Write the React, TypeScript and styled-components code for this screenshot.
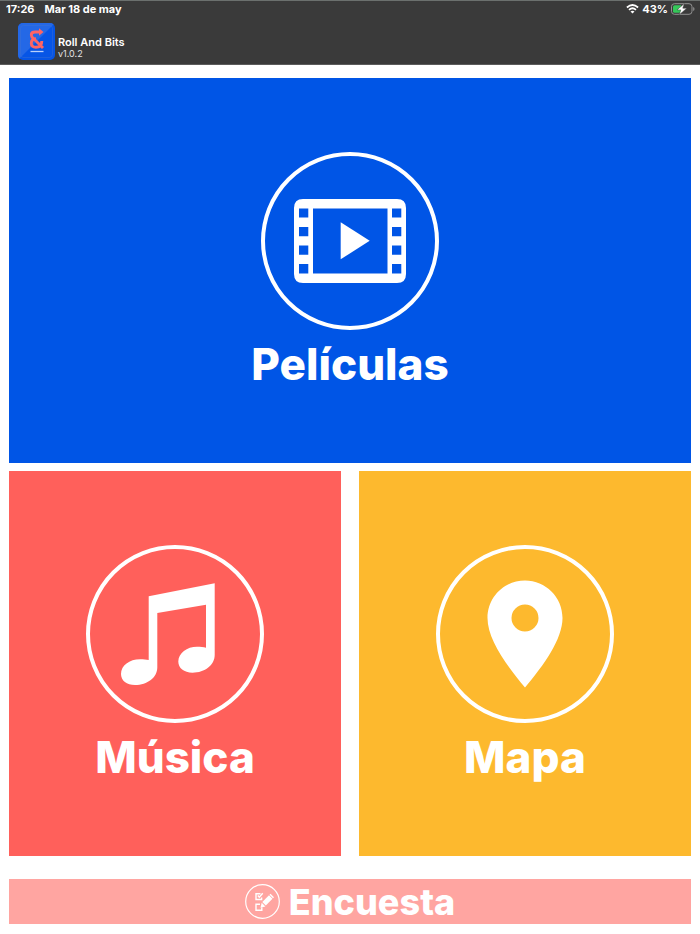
import React from 'react';
import styled, { createGlobalStyle } from 'styled-components';

const GlobalStyle = createGlobalStyle`
  * { box-sizing: border-box; }
  body {
    margin: 0;
    background: #ffffff;
    font-family: Inter, "Liberation Sans", sans-serif;
  }
`;

const Page = styled.div`
  display: flex;
  flex-direction: column;
  min-height: 100vh;
`;

const Header = styled.header`
  background: #3a3a3a;
  color: #ffffff;
  border-top: 1px solid #6b706e;
  border-bottom: 1px solid #5c5c5c;
`;

const StatusBar = styled.div`
  display: flex;
  align-items: center;
  justify-content: space-between;
  height: 16px;
  padding: 0 5px 0 6px;
  font-size: 11px;
  line-height: 16px;
  font-weight: 700;
`;

const StatusGroup = styled.div<{ $gap: number }>`
  display: flex;
  align-items: center;
  gap: ${({ $gap }) => $gap}px;
`;

const Brand = styled.div`
  display: flex;
  align-items: flex-end;
  gap: 3px;
  padding: 6px 18px 4px;
`;

const BrandText = styled.div`
  display: flex;
  flex-direction: column;
`;

const AppName = styled.h1`
  margin: 0;
  font-size: 11px;
  line-height: 12px;
  font-weight: 600;
`;

const Version = styled.span`
  font-size: 9px;
  line-height: 12px;
  color: #e4e4e4;
`;

const Main = styled.main`
  flex: 1;
  display: flex;
  flex-direction: column;
  padding: 13px 9px 10px;
`;

const Tiles = styled.nav`
  flex: 1;
  display: grid;
  grid-template-columns: 1fr 1fr;
  grid-auto-rows: 1fr;
  gap: 8px 18px;
  margin-bottom: 23px;
`;

const Tile = styled.button<{ $color: string; $wide?: boolean }>`
  grid-column: ${({ $wide }) => ($wide ? '1 / -1' : 'auto')};
  display: flex;
  flex-direction: column;
  align-items: center;
  justify-content: center;
  gap: 8px;
  padding: 16px;
  border: 0;
  background: ${({ $color }) => $color};
  color: #ffffff;
  font-family: inherit;
  cursor: pointer;
`;

const TileLabel = styled.span`
  font-size: 44px;
  line-height: 52px;
  font-weight: 800;
`;

const SurveyButton = styled.button`
  display: flex;
  align-items: center;
  justify-content: center;
  gap: 9px;
  height: 45px;
  padding: 0;
  border: 0;
  background: #ffa5a1;
  color: #ffffff;
  font-family: inherit;
  font-size: 36px;
  line-height: 44px;
  font-weight: 800;
  cursor: pointer;
`;

const Ring = ({ children }: { children: React.ReactNode }) => (
  <svg width="178" height="178" viewBox="0 0 178 178" fill="#fff" aria-hidden="true">
    <circle cx="89" cy="89" r="87" fill="none" stroke="#fff" strokeWidth="4" />
    {children}
  </svg>
);

const FilmIcon = () => (
  <Ring>
    <path
      fillRule="evenodd"
      d="M42 47H136Q145 47 145 56V122Q145 131 136 131H42Q33 131 33 122V56Q33 47 42 47Z
         M52 56.5V121.5H126.5V56.5Z
         M38 56.5V65.5H47.3V56.5Z M38 75V84.3H47.3V75Z M38 93.5V102.7H47.3V93.5Z M38 112V121.5H47.3V112Z
         M131 56.5V65.5H140.3V56.5Z M131 75V84.3H140.3V75Z M131 93.5V102.7H140.3V93.5Z M131 112V121.5H140.3V112Z"
    />
    <path d="M79.7 70.3L108.7 88.8L79.7 107.3Z" />
  </Ring>
);

const MusicIcon = () => (
  <Ring>
    <path
      d="M62.7 51.3L128.7 38.3V110C128.7 120 119 127.7 106.5 127.7C98 127.7 92.3 123 92.3 116.5
         C92.3 108 101 101.7 111 101.7C114.5 101.7 117.5 102 120 102.7V59.7L71.3 68V122.5
         C71.3 132.5 61.5 140 49 140C40.7 140 35 135.6 35 129C35 120.5 43.5 114.3 54 114.3
         C57.5 114.3 60.3 114.5 62.7 115Z"
    />
  </Ring>
);

const PinIcon = () => (
  <Ring>
    <path
      fillRule="evenodd"
      d="M89 35.5C68.3 35.5 51.5 52.2 51.5 73C51.5 94 70 120 89 142.5C108 120 126.5 94 126.5 73
         C126.5 52.2 109.7 35.5 89 35.5Z M89 59.5A13.5 13.5 0 1 1 89 86.5A13.5 13.5 0 1 1 89 59.5Z"
    />
  </Ring>
);

const SurveyIcon = () => (
  <svg width="35" height="35" viewBox="0 0 35 35" fill="none" stroke="#fff" aria-hidden="true">
    <circle cx="17.5" cy="17.5" r="16.8" strokeWidth="1.2" />
    <path d="M15.5 9.7H11V15.5H16.6V13.5" strokeWidth="1.4" />
    <path d="M12.8 11.5L14.3 13.2L17.7 9.2" strokeWidth="1.4" />
    <path d="M15 20.2H11V26.3H16.8V23.5" strokeWidth="1.4" />
    <path d="M15.5 23.7L16.7 18.7L20.4 22.5Z" fill="#fff" stroke="none" />
    <path d="M17.3 18L24 11.3L27.5 14.8L20.8 21.5Z" fill="#fff" stroke="none" />
    <path d="M24.5 10.8L25.5 9.8L29 13.3L28 14.3Z" fill="#fff" stroke="none" />
  </svg>
);

const Logo = () => (
  <svg width="37" height="37" viewBox="0 0 37 37" role="img" aria-label="Roll And Bits">
    <defs>
      <clipPath id="logo-shape">
        <rect width="37" height="37" rx="5" />
      </clipPath>
    </defs>
    <g clipPath="url(#logo-shape)">
      <rect width="37" height="37" fill="#0655e6" />
      <path d="M0 0H37L0 37Z" fill="#2468e6" />
    </g>
    <rect x="2.5" y="2.5" width="32" height="32" rx="3" fill="none" stroke="#4a76cc" strokeOpacity="0.6" strokeWidth="0.6" />
    <path
      d="M22 9H17C14.5 9 13.3 10.3 13.3 12C13.3 13.8 14.5 14.8 15.8 15.8L25 25
         M18 15.8C15 16 13.3 17.7 13.3 20.3C13.3 22.8 15.2 24.3 18 24.3C21.5 24.3 23.8 22 23.8 18"
      fill="none"
      stroke="#ff6464"
      strokeWidth="2.9"
    />
    <path d="M21 5.3L25.5 9L21 12.7Z" fill="#ff6464" />
    <path d="M12.5 28.5H25.5" stroke="#b9d0fa" strokeWidth="1.3" />
  </svg>
);

const WifiIcon = () => (
  <svg width="13" height="10" viewBox="0 0 13 10" fill="none" stroke="#fff" strokeWidth="1.7" aria-hidden="true">
    <path d="M0.9 3.5Q6.5 -1.5 12.1 3.5M3 5.8Q6.5 2.7 10 5.8" />
    <path d="M4.5 7.4Q6.5 5.9 8.5 7.4L6.5 9.5Z" fill="#fff" stroke="none" />
  </svg>
);

const BatteryIcon = () => (
  <svg width="24" height="12" viewBox="0 0 24 12" aria-hidden="true">
    <rect x="0.5" y="0.7" width="20.5" height="10.6" rx="3" fill="none" stroke="#929292" />
    <path d="M22.2 4V8Q23.5 7.5 23.5 6Q23.5 4.5 22.2 4Z" fill="#929292" />
    <path d="M3.5 2.2H10V9.8H3.5Q2 9.8 2 8.3V3.7Q2 2.2 3.5 2.2Z" fill="#35c759" />
    <path d="M13.3 0.6L6 6.9H9.8L8.3 11.7L15.8 5.2H11.8Z" fill="#fff" stroke="#3a3a3a" strokeWidth="0.5" />
  </svg>
);

const tiles = [
  { label: 'Películas', color: '#0055e6', wide: true, Icon: FilmIcon },
  { label: 'Música', color: '#ff605b', wide: false, Icon: MusicIcon },
  { label: 'Mapa', color: '#fdb92e', wide: false, Icon: PinIcon },
];

export default function App() {
  return (
    <Page>
      <GlobalStyle />
      <Header>
        <StatusBar>
          <StatusGroup $gap={10}>
            <span>17:26</span>
            <span>Mar 18 de may</span>
          </StatusGroup>
          <StatusGroup $gap={3}>
            <WifiIcon />
            <span>43%</span>
            <BatteryIcon />
          </StatusGroup>
        </StatusBar>
        <Brand>
          <Logo />
          <BrandText>
            <AppName>Roll And Bits</AppName>
            <Version>v1.0.2</Version>
          </BrandText>
        </Brand>
      </Header>
      <Main>
        <Tiles>
          {tiles.map(({ label, color, wide, Icon }) => (
            <Tile key={label} type="button" $color={color} $wide={wide}>
              <Icon />
              <TileLabel>{label}</TileLabel>
            </Tile>
          ))}
        </Tiles>
        <SurveyButton type="button">
          <SurveyIcon />
          Encuesta
        </SurveyButton>
      </Main>
    </Page>
  );
}
